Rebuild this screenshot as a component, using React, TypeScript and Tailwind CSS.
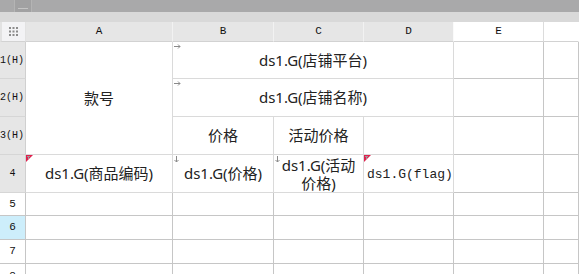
import React from "react";

const sans = { fontFamily: '"Noto Sans", "Noto Sans CJK SC", sans-serif' };
const mono = { fontFamily: '"Liberation Mono", "DejaVu Sans Mono", monospace' };

function RightArrow() {
  return (
    <svg className="absolute left-[1px] top-[2px]" width="7" height="5" viewBox="0 0 7 5">
      <path d="M0 2.5H6M4 0.5L6 2.5L4 4.5" stroke="#8a8a8a" strokeWidth="1" fill="none" />
    </svg>
  );
}

function DownArrow() {
  return (
    <svg className="absolute left-[1px] top-[1px]" width="5" height="7" viewBox="0 0 5 7">
      <path d="M2.5 0V6M0.5 4L2.5 6L4.5 4" stroke="#8a8a8a" strokeWidth="1" fill="none" />
    </svg>
  );
}

function Flag() {
  return (
    <svg className="absolute left-0 top-0" width="8" height="7" viewBox="0 0 8 7">
      <path d="M0 0H7L0 7Z" fill="#e0204e" />
      <path d="M1 1.5H4M2.5 1.5V4" stroke="#9a9a9a" strokeWidth="1" />
    </svg>
  );
}

const light = "border-[#dadada]";
const dark = "border-[#c6c6c6]";

export default function App() {
  const colHead = "flex items-center justify-center text-[11px] text-[#111] border-b border-b-[#d2d2d2] border-r";
  const rowHeadGray = "flex items-center bg-[#e6e6e6] border-b border-b-[#d6d6d6] border-r border-r-[#d0d0d0] text-[10px] text-[#111]";
  const rowHeadWhite = "flex items-center justify-center bg-white border-b border-b-[#c6c6c6] border-r border-r-[#c6c6c6] text-[11px] text-[#111]";
  const cell = "relative border-r border-b bg-white";
  const txt = "flex items-center justify-center text-[15px] leading-[17px] text-[#222] text-center";

  const emptyRows = [5, 6, 7, 8];
  const cols = [2, 3, 4, 5, 6, 7];

  return (
    <div className="w-[579px] h-[274px] overflow-hidden bg-white" style={sans}>
      <div className="h-[12px] bg-[#a9a9aa] flex">
        <div className="ml-[14px] w-[18px] h-full bg-[#a1a1a2] border-x border-[#b4b4b4] flex items-end justify-center pb-[3px]">
          <div className="w-[10px] h-px bg-[#c4c4c4]" />
        </div>
      </div>
      <div className="h-[10px] bg-[#d9d9d9]" />
      <div className="grid grid-cols-[26px_147px_101px_90px_90px_90px_1fr] grid-rows-[20px_37px_38px_38px_38px_23px_24px_24px_24px]">
        {/* corner */}
        <div className="col-start-1 row-start-1 bg-[#f3f3f5] border-l-2 border-l-[#e2e2e2] border-b border-b-[#d2d2d2] border-r border-r-[#e2e2e2] flex items-center justify-center">
          <svg width="9" height="9" viewBox="0 0 9 9">
            {[0, 3.5, 7].map((x) =>
              [0, 3.5, 7].map((y) => <rect key={`${x}-${y}`} x={x} y={y} width="2" height="2" fill="#8c8c8c" />)
            )}
          </svg>
        </div>
        {/* column headers */}
        <div className={`col-start-2 row-start-1 bg-[#e6e6e6] border-r-[#f2f2f2] ${colHead}`} style={mono}>A</div>
        <div className={`col-start-3 row-start-1 bg-[#e6e6e6] border-r-[#f2f2f2] ${colHead}`} style={mono}>B</div>
        <div className={`col-start-4 row-start-1 bg-[#e6e6e6] border-r-[#f2f2f2] ${colHead}`} style={mono}>C</div>
        <div className={`col-start-5 row-start-1 bg-[#e6e6e6] border-r-[#fafafa] ${colHead}`} style={mono}>D</div>
        <div className={`col-start-6 row-start-1 bg-white border-r-[#dcdcdc] ${colHead}`} style={mono}>E</div>
        <div className={`col-start-7 row-start-1 bg-white border-r-white ${colHead}`} style={mono}></div>

        {/* row headers */}
        <div className={`col-start-1 row-start-2 ${rowHeadGray}`} style={mono}>1(H)</div>
        <div className={`col-start-1 row-start-3 ${rowHeadGray}`} style={mono}>2(H)</div>
        <div className={`col-start-1 row-start-4 ${rowHeadGray}`} style={mono}>3(H)</div>
        <div className={`col-start-1 row-start-5 justify-center ${rowHeadGray}`} style={mono}>4</div>
        <div className={`col-start-1 row-start-6 ${rowHeadWhite}`} style={mono}>5</div>
        <div className={`col-start-1 row-start-7 ${rowHeadWhite} !bg-[#cdeefb]`} style={mono}>6</div>
        <div className={`col-start-1 row-start-8 ${rowHeadWhite}`} style={mono}>7</div>
        <div className={`col-start-1 row-start-9 ${rowHeadWhite} items-start pt-[4px]`} style={mono}>8</div>

        {/* row 1-3 */}
        <div className={`col-start-2 row-start-2 row-span-3 ${cell} ${light} ${txt}`}>款号</div>
        <div className={`col-start-3 col-span-3 row-start-2 ${cell} ${light} ${txt}`}>
          <RightArrow />
          ds1.G(店铺平台)
        </div>
        <div className={`col-start-6 row-start-2 ${cell} ${dark}`} />
        <div className={`col-start-7 row-start-2 ${cell} ${dark}`} />

        <div className={`col-start-3 col-span-3 row-start-3 ${cell} ${light} ${txt}`}>
          <RightArrow />
          ds1.G(店铺名称)
        </div>
        <div className={`col-start-6 row-start-3 ${cell} ${dark}`} />
        <div className={`col-start-7 row-start-3 ${cell} ${dark}`} />

        <div className={`col-start-3 row-start-4 ${cell} ${light} ${txt}`}>价格</div>
        <div className={`col-start-4 row-start-4 ${cell} ${light} ${txt}`}>活动价格</div>
        <div className={`col-start-5 row-start-4 ${cell} ${light}`} />
        <div className={`col-start-6 row-start-4 ${cell} ${dark}`} />
        <div className={`col-start-7 row-start-4 ${cell} ${dark}`} />

        {/* row 4 */}
        <div className={`col-start-2 row-start-5 ${cell} ${light} ${txt}`}>
          <Flag />
          ds1.G(商品编码)
        </div>
        <div className={`col-start-3 row-start-5 ${cell} ${light} ${txt}`}>
          <DownArrow />
          ds1.G(价格)
        </div>
        <div className={`col-start-4 row-start-5 ${cell} ${light} ${txt}`}>
          <DownArrow />
          <span className="block leading-[18px]">
            ds1.G(活动
            <br />
            价格)
          </span>
        </div>
        <div className={`col-start-5 row-start-5 ${cell} ${light} flex items-center pl-[3px] pt-[3px] text-[13px] text-[#222]`} style={mono}>
          <Flag />
          ds1.G(flag)
        </div>
        <div className={`col-start-6 row-start-5 ${cell} ${dark}`} />
        <div className={`col-start-7 row-start-5 ${cell} ${dark}`} />

        {emptyRows.map((r, ri) =>
          cols.map((c) => (
            <div
              key={`${r}-${c}`}
              className={`${cell} ${dark}`}
              style={{ gridColumnStart: c, gridRowStart: ri + 6 }}
            />
          ))
        )}
      </div>
    </div>
  );
}
